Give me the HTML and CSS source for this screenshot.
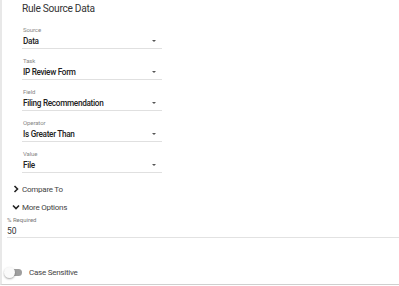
FILE: index.html
```html
<!DOCTYPE html>
<html lang="en">

<head>
    <meta charset="UTF-8">
    <title>Rule Source Data</title>
    <link rel="stylesheet" href="styles.css">
</head>

<body>
    <div class="panel">
        <h1 class="title">Rule Source Data</h1>

        <div class="fields">
            <div class="field">
                <div class="label">Source</div>
                <div class="select"><span>Data</span><i class="caret"></i></div>
            </div>
            <div class="field">
                <div class="label">Task</div>
                <div class="select"><span>IP Review Form</span><i class="caret"></i></div>
            </div>
            <div class="field">
                <div class="label">Field</div>
                <div class="select"><span>Filing Recommendation</span><i class="caret"></i></div>
            </div>
            <div class="field">
                <div class="label">Operator</div>
                <div class="select"><span>Is Greater Than</span><i class="caret"></i></div>
            </div>
            <div class="field">
                <div class="label">Value</div>
                <div class="select"><span>File</span><i class="caret"></i></div>
            </div>
        </div>

        <div class="options">
            <div class="toggle-row">
                <svg class="chevron" width="6" height="8" viewBox="0 0 6 8">
                    <path d="M1.5 1 L4.5 4 L1.5 7" fill="none" stroke="#222" stroke-width="1.6" />
                </svg>
                <span>Compare To</span>
            </div>
            <div class="toggle-row">
                <svg class="chevron" width="8" height="6" viewBox="0 0 8 6">
                    <path d="M1 1.5 L4 4.5 L7 1.5" fill="none" stroke="#222" stroke-width="1.6" />
                </svg>
                <span>More Options</span>
            </div>
        </div>

        <div class="required">
            <div class="small-label">% Required</div>
            <div class="input">50</div>
        </div>

        <div class="switch-row">
            <span class="switch"><span class="thumb"></span></span>
            <span>Case Sensitive</span>
        </div>
    </div>
</body>

</html>
```

FILE: styles.css
```css
* {
    margin: 0;
    padding: 0;
    box-sizing: border-box;
}

body {
    font-family: Roboto, "Liberation Sans", sans-serif;
    background-color: #fff;
    color: #222;
}

.panel {
    height: 285px;
    border-left: 2px solid #e8e8e8;
    border-bottom: 1px solid #cfcfcf;
}

.title {
    height: 25px;
    padding: 1px 0 0 20px;
    font-size: 10.2px;
    font-weight: 400;
    line-height: 15px;
    letter-spacing: -0.3px;
    color: #333;
}

.fields {
    padding-left: 20px;
    width: 160px;
}

.field {
    margin-bottom: 7px;
}

.label {
    height: 9px;
    font-size: 6px;
    line-height: 10px;
    letter-spacing: -0.1px;
    color: #888;
    padding-left: 1px;
}

.select {
    display: flex;
    align-items: center;
    justify-content: space-between;
    height: 15px;
    padding: 0 4px 0 1px;
    font-size: 8.2px;
    font-weight: 500;
    letter-spacing: -0.3px;
    border-bottom: 1px solid #e0e0e0;
}

.caret {
    width: 0;
    height: 0;
    margin-right: 2px;
    border-left: 2.5px solid transparent;
    border-right: 2.5px solid transparent;
    border-top: 2.5px solid #555;
}

.options {
    margin-top: 1px;
}

.toggle-row {
    display: flex;
    align-items: center;
    height: 18px;
    padding-left: 9px;
    font-size: 8px;
    letter-spacing: -0.25px;
    color: #444;
}

.chevron {
    width: 10px;
    margin-right: 1px;
}

.required {
    padding-left: 5px;
}

.small-label {
    height: 8px;
    font-size: 6px;
    line-height: 8px;
    color: #777;
}

.input {
    height: 14px;
    font-size: 8.5px;
    line-height: 14px;
    color: #333;
    border-bottom: 1px solid #e2e2e2;
}

.switch-row {
    display: flex;
    align-items: center;
    height: 18px;
    margin-top: 25px;
    padding-left: 3px;
    font-size: 8px;
    letter-spacing: -0.25px;
    color: #444;
}

.switch {
    position: relative;
    width: 17px;
    height: 7px;
    margin-right: 7px;
    border-radius: 4px;
    background-color: #9e9e9e;
}

.thumb {
    position: absolute;
    left: -1px;
    top: -2px;
    width: 11px;
    height: 11px;
    border-radius: 50%;
    background-color: #fafafa;
    box-shadow: 0 1px 2px rgba(0, 0, 0, 0.35);
}
```
